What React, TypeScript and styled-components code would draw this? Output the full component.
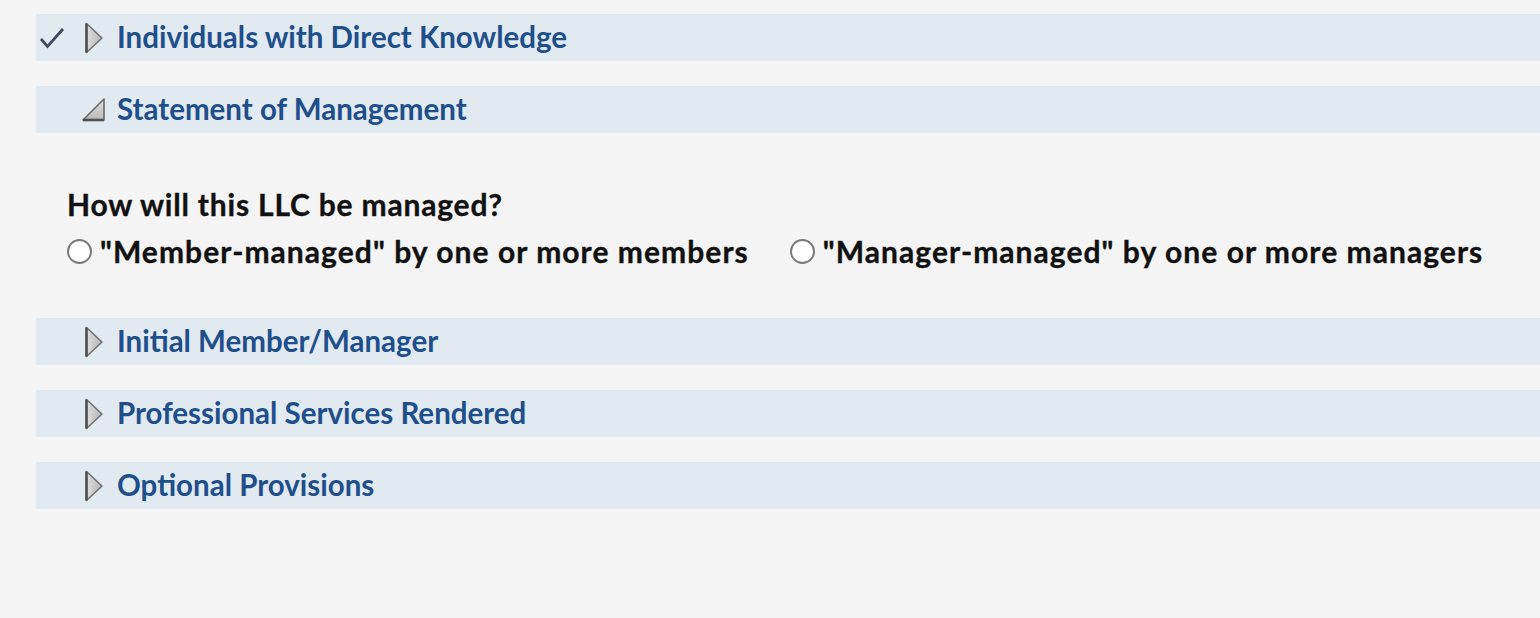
import React from "react";
import styled, { createGlobalStyle } from "styled-components";

const Global = createGlobalStyle`
  html, body { margin: 0; padding: 0; background: #f4f4f4; }
  body { font-family: Lato, "Open Sans", sans-serif; }
`;

const Page = styled.div`
  width: 1540px;
  height: 618px;
  background: #f4f4f4;
  padding: 14px 0 0 36px;
  box-sizing: border-box;
  display: flex;
  flex-direction: column;
`;

const Bar = styled.div<{ $gapAfter: number }>`
  height: 47px;
  background: #e1e9f1;
  display: flex;
  align-items: center;
  margin-bottom: ${(p) => p.$gapAfter}px;
`;

const CheckSlot = styled.div`
  width: 48px;
  height: 47px;
  display: flex;
  align-items: center;
  justify-content: flex-start;
  padding-left: 3px;
  box-sizing: border-box;
`;

const IconSlot = styled.div<{ $shift?: number }>`
  width: 33px;
  height: 47px;
  display: flex;
  align-items: center;
  & > svg { margin-left: ${(p) => p.$shift ?? 0}px; }
`;

const Title = styled.span`
  font-family: Lato, sans-serif;
  font-weight: 700;
  font-size: 29.5px;
  color: #1e4f8b;
  margin-top: -2px;
`;

const Section = styled.div`
  padding: 54px 0 0 31px;
  height: 185px;
  box-sizing: border-box;
`;

const Question = styled.div`
  font-family: Lato, sans-serif;
  font-weight: 700;
  font-size: 30px;
  letter-spacing: 0.8px;
  -webkit-text-stroke: 0.35px #111;
  color: #111;
  line-height: 34px;
`;

const Options = styled.div`
  display: flex;
  gap: 41px;
  margin-top: 13px;
`;

const Option = styled.label`
  display: flex;
  align-items: center;
  gap: 8px;
  font-family: Lato, sans-serif;
  font-weight: 700;
  font-size: 30px;
  letter-spacing: 1.05px;
  -webkit-text-stroke: 0.35px #111;
  color: #111;
  line-height: 34px;
`;

const Radio = styled.span`
  width: 21px;
  height: 21px;
  border-radius: 50%;
  border: 2px solid #7a7a7a;
  background: #fff;
  display: inline-block;
  flex: none;
`;

const Check = () => (
  <svg width="26" height="24" viewBox="0 0 26 24">
    <path d="M2 13 L8.5 20.5 L24 3" fill="none" stroke="#3f4a60" strokeWidth="2.8" strokeLinejoin="miter" />
  </svg>
);

const RightTri = () => (
  <svg width="20" height="34" viewBox="0 0 20 34">
    <defs>
      <linearGradient id="rg" x1="0" y1="0" x2="1" y2="0">
        <stop offset="0" stopColor="#dedede" />
        <stop offset="1" stopColor="#b4b4b4" />
      </linearGradient>
    </defs>
    <path d="M2.5 2.5 L18 17 L2.5 31.5 Z" fill="url(#rg)" stroke="#707070" strokeWidth="1.6" strokeLinejoin="round" />
    <path d="M2.5 2.5 L2.5 31.5" stroke="#505050" strokeWidth="2.6" />
  </svg>
);

const DownTri = () => (
  <svg width="26" height="27" viewBox="0 0 26 27">
    <defs>
      <linearGradient id="dg" x1="0" y1="0" x2="0" y2="1">
        <stop offset="0" stopColor="#e2e2e2" />
        <stop offset="1" stopColor="#b8b8b8" />
      </linearGradient>
    </defs>
    <path d="M23 3 L23 24 L2 24 Z" fill="url(#dg)" stroke="#6a6a6a" strokeWidth="1.6" strokeLinejoin="round" />
    <path d="M2 24 L23 24" stroke="#505050" strokeWidth="2.6" />
  </svg>
);

const rows = [
  "Initial Member/Manager",
  "Professional Services Rendered",
  "Optional Provisions",
];

export default function App() {
  return (
    <>
      <Global />
      <Page>
        <Bar $gapAfter={25}>
          <CheckSlot><Check /></CheckSlot>
          <IconSlot><RightTri /></IconSlot>
          <Title>Individuals with Direct Knowledge</Title>
        </Bar>
        <Bar $gapAfter={0}>
          <CheckSlot />
          <IconSlot $shift={-3}><DownTri /></IconSlot>
          <Title>Statement of Management</Title>
        </Bar>
        <Section>
          <Question>How will this LLC be managed?</Question>
          <Options>
            <Option><Radio />"Member-managed" by one or more members</Option>
            <Option><Radio />"Manager-managed" by one or more managers</Option>
          </Options>
        </Section>
        {rows.map((r, i) => (
          <Bar key={r} $gapAfter={i < rows.length - 1 ? 25 : 0}>
            <CheckSlot />
            <IconSlot><RightTri /></IconSlot>
            <Title>{r}</Title>
          </Bar>
        ))}
      </Page>
    </>
  );
}
